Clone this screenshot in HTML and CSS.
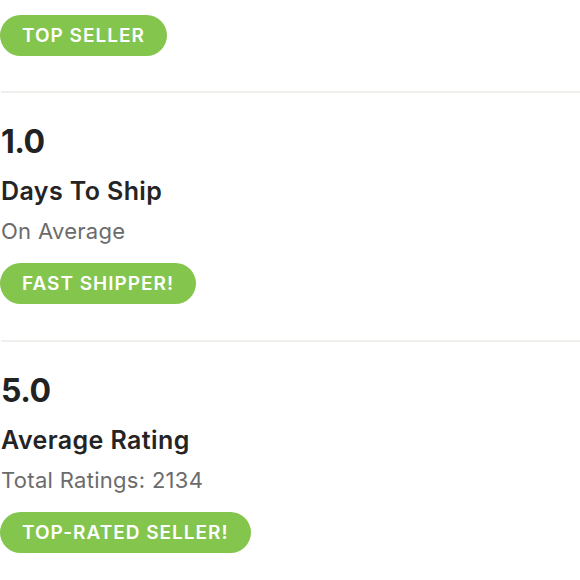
FILE: index.html
```html
<!DOCTYPE html>
<html>
<head>
<meta charset="utf-8">
<link rel="stylesheet" href="styles.css">
</head>
<body>
<div class="stats">
  <section class="stat stat-first">
    <span class="badge">TOP SELLER</span>
  </section>
  <section class="stat">
    <div class="num">1.0</div>
    <div class="title">Days To Ship</div>
    <div class="sub">On Average</div>
    <span class="badge">FAST SHIPPER!</span>
  </section>
  <section class="stat stat-last">
    <div class="num">5.0</div>
    <div class="title">Average Rating</div>
    <div class="sub">Total Ratings: 2134</div>
    <span class="badge">TOP-RATED SELLER!</span>
  </section>
</div>
</body>
</html>
```
FILE: styles.css
```css
html, body {
  margin: 0;
  padding: 0;
  background: #ffffff;
}
body {
  font-family: Inter, "Liberation Sans", sans-serif;
  color: #222222;
}
.stats {
  display: flex;
  flex-direction: column;
  padding-left: 1px;
}
.stat {
  display: flex;
  flex-direction: column;
  align-items: flex-start;
  padding: 29px 0 36px;
  border-bottom: 2px solid #efefec;
}
.stat-first {
  padding-top: 15px;
  padding-bottom: 35px;
}
.stat-last {
  border-bottom: none;
}
.num {
  font-size: 32px;
  line-height: 40px;
  font-weight: 700;
  color: #222;
  letter-spacing: -0.5px;
}
.title {
  margin-top: 13px;
  font-size: 25px;
  line-height: 32px;
  font-weight: 600;
  color: #242424;
  letter-spacing: 0.4px;
}
.sub {
  margin-top: 10px;
  font-size: 22px;
  line-height: 28px;
  color: #6b6b6b;
  letter-spacing: 0.3px;
}
.sub + .badge {
  margin-top: 18px;
}
.badge {
  display: inline-block;
  margin-left: -1px;
  height: 41px;
  line-height: 41px;
  padding: 0 22px;
  border-radius: 21px;
  background: #84c54e;
  color: #ffffff;
  font-size: 19px;
  font-weight: 600;
  letter-spacing: 1px;
}
```
